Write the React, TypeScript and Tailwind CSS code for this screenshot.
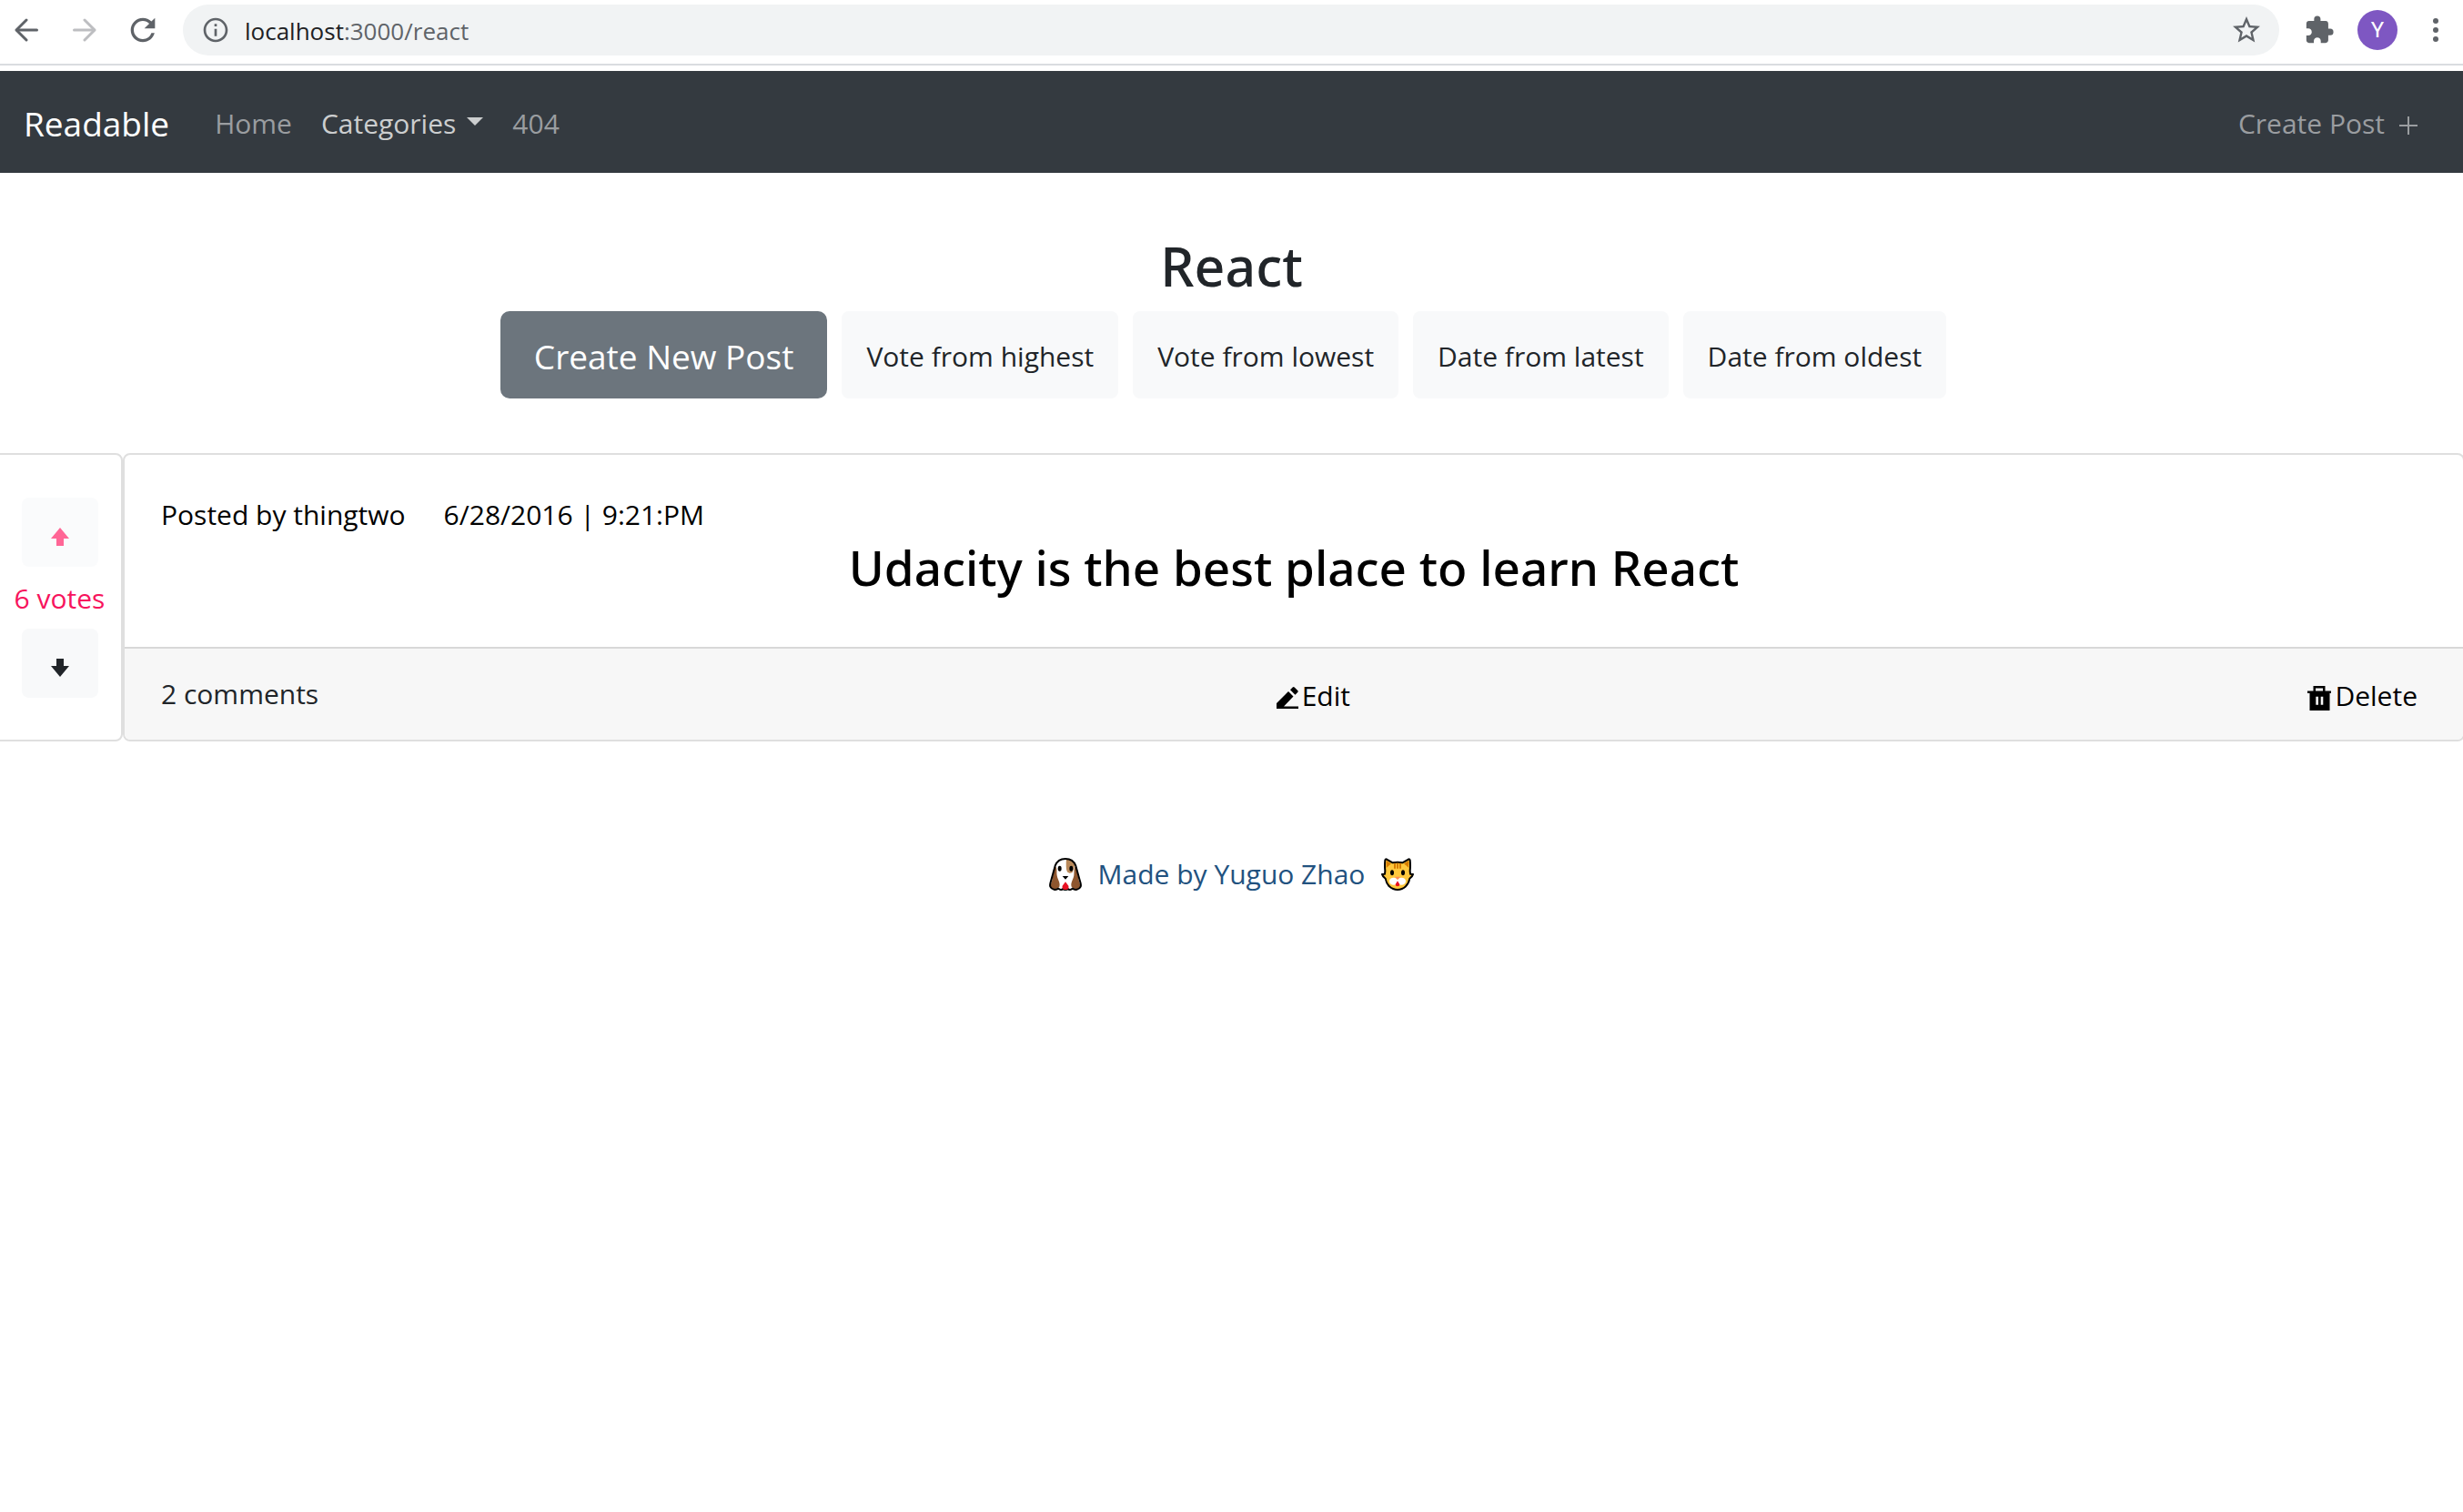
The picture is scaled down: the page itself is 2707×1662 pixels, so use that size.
import type { ReactNode } from "react";
import { MdExtension, MdInfoOutline, MdRefresh, MdStarBorder } from "react-icons/md";

function BackArrow({ className }: { className: string }) {
  return (
    <svg viewBox="0 0 26 26" className={className} fill="none" stroke="currentColor" strokeWidth="3" strokeLinecap="round">
      <path d="M24.5 13H2.5" />
      <path d="M13 2 2 13l11 11" strokeLinejoin="round" />
    </svg>
  );
}

function Kebab() {
  return (
    <svg viewBox="0 0 6 26" className="h-[26px] w-[6px]" fill="currentColor">
      <circle cx="3" cy="3" r="3" />
      <circle cx="3" cy="13" r="3" />
      <circle cx="3" cy="23" r="3" />
    </svg>
  );
}

function VoteArrow({ down = false }: { down?: boolean }) {
  return (
    <svg viewBox="0 0 20 20" className="size-5" fill="currentColor">
      <path d={down ? "M10 20 0 8h6V0h8v8h6z" : "M10 0l10 12h-6v8H6v-8H0z"} />
    </svg>
  );
}

function EditIcon() {
  return (
    <svg viewBox="0 0 24 24" className="mt-1 size-6" fill="currentColor">
      <path d="M0 24v-6L13 5l5.500 5.500L8 21.500h16V24z" />
      <path d="M15 3.300 17.700.600q1-1 2 0l3.500 3.500q1 1 0 2L20.500 8.800z" />
    </svg>
  );
}

function TrashIcon() {
  return (
    <svg viewBox="0 0 26 27" className="mt-1 h-[27px] w-[26px]" fill="currentColor" fillRule="evenodd">
      <path d="M6.500 0h13v5.500H26V8h-1.500v19h-22V8H0V5.500h6.500zM9 2.500v3h8v-3zM9.300 11.700v9H12v-9zM14.700 11.700v9h2.600v-9z" />
    </svg>
  );
}

function DogFace() {
  return (
    <svg viewBox="0 0 108 108" className="size-9" role="img" aria-label="Dog face">
      <path d="M20 26C26 10 38 3 54 3s28 7 34 23l12 44c3 12 7 18 4 25-5 11-19 12-27 6-5 5-11 5-15 1-4 4-12 4-16 0-4 4-10 4-15-1-8 6-22 5-27-6-3-7 1-13 4-25z" fill="#fff" />
      <path d="M57 4c14 0 24 8 28 20l-8 24c-6 4-13 3-17-2-5-7-4-32-3-42z" fill="#b98a5b" />
      <path d="M19 28c9 2 5 18 7 30 2 14 12 24 8 37-6 9-23 10-29 1-2-8 4-14 6-28z" fill="#8e562e" />
      <path d="M89 28c-9 2-5 18-7 30-2 14-12 24-8 37 6 9 23 10 29 1 2-8-4-14-6-28z" fill="#8e562e" />
      <path d="M20 26C26 10 38 3 54 3s28 7 34 23l12 44c3 12 7 18 4 25-5 11-19 12-27 6-5 5-11 5-15 1-4 4-12 4-16 0-4 4-10 4-15-1-8 6-22 5-27-6-3-7 1-13 4-25z" fill="none" stroke="#000" strokeWidth="6" strokeLinejoin="round" />
      <ellipse cx="35" cy="35" rx="6" ry="9" />
      <ellipse cx="73" cy="35" rx="6" ry="9" />
      <path d="M44 60h20L54 71z" />
      <path d="M54 79 64 92c2 9-3 13-10 13s-12-4-10-13z" fill="#e81123" />
    </svg>
  );
}

function CatFace() {
  return (
    <svg viewBox="0 0 108 108" className="size-9" role="img" aria-label="Cat face">
      <path d="M17 4 38 16q16-4 32 0L91 4q3 0 4 3 2 18 0 36l1 10 9 1q-1 6-11 14C90 90 75 105 54 105S18 90 14 68Q4 60 3 54l9-1 1-10q-2-18 0-36 1-3 4-3z" fill="#ffc83d" stroke="#000" strokeWidth="6" strokeLinejoin="round" />
      <path d="M17 9 33 19 17 33zM91 9 75 19 91 33z" fill="#d67d00" />
      <path d="M42 17h6v18h-6zM51 17h6v18h-6zM60 17h6v18h-6z" fill="#d67d00" />
      <ellipse cx="36" cy="49" rx="6" ry="9" />
      <ellipse cx="72" cy="49" rx="6" ry="9" />
      <ellipse cx="41" cy="77" rx="14" ry="12" fill="#fff" />
      <ellipse cx="67" cy="77" rx="14" ry="12" fill="#fff" />
      <path d="M45 62h18l-9 10z" fill="#ff8c5a" />
      <path d="M54 76l7 11q0 7-7 7t-7-7z" fill="#e81123" />
    </svg>
  );
}

function BrowserBar() {
  return (
    <div className="flex h-[72px] items-center border-b-2 border-[#dadce0] bg-white pb-1 pl-4 pr-[27px] text-[#5f6368]">
      <button aria-label="Back">
        <BackArrow className="size-[26px]" />
      </button>
      <button aria-label="Forward" className="ml-[38px] text-[#bdbec1]">
        <BackArrow className="size-[26px] rotate-180" />
      </button>
      <button aria-label="Reload" className="ml-[31px]">
        <MdRefresh className="size-10" />
      </button>
      <div className="ml-6 flex h-14 flex-1 items-center rounded-full bg-[#f1f3f4] pl-5 pr-[18px]">
        <MdInfoOutline className="size-8" />
        <a href="#" className="ml-4 flex-1 pt-[2px] text-[26px]">
          <span className="text-[#202124]">localhost</span>:3000/react
        </a>
        <button aria-label="Bookmark this page">
          <MdStarBorder className="size-9" />
        </button>
      </div>
      <button aria-label="Extensions" className="ml-[27px]">
        <MdExtension className="size-[34px]" />
      </button>
      <button
        aria-label="Profile"
        className="ml-[25px] size-11 rounded-full bg-[#7e57c2] font-['Roboto',sans-serif] text-2xl text-white"
      >
        Y
      </button>
      <button aria-label="Menu" className="ml-[39px]">
        <Kebab />
      </button>
    </div>
  );
}

function NavBar() {
  return (
    <nav className="mt-[6px] flex h-28 items-center bg-[#343a40] pt-[3px] pl-[26px] pr-[50px] text-[#9a9da0]">
      <a href="#" className="text-[37px] text-white">
        Readable
      </a>
      <a href="#" className="ml-[50px]">
        Home
      </a>
      <button className="ml-8 flex items-center gap-3 text-[#cccecf]">
        Categories
        <svg viewBox="0 0 18 9" className="-mt-1 h-[9px] w-[18px]" fill="currentColor">
          <path d="M0 0h18L9 9z" />
        </svg>
      </button>
      <a href="#" className="ml-8">
        404
      </a>
      <a href="#" className="ml-auto flex items-center gap-4">
        Create Post
        <svg viewBox="0 0 20 20" className="mt-1 size-5" stroke="currentColor" strokeWidth="2">
          <path d="M10 0v20M0 10h20" />
        </svg>
      </a>
    </nav>
  );
}

function SortButton({ children }: { children: ReactNode }) {
  return <button className="rounded-[8px] bg-[#f8f9fa] px-[27px] pt-1 text-[#212529]">{children}</button>;
}

function VotePanel() {
  return (
    <div className="-ml-2 flex w-[143px] flex-col items-center justify-center rounded-[8px] border-2 border-[#dfdfdf] pl-1">
      <button aria-label="Vote up" className="flex h-[76px] w-[84px] items-center justify-center rounded-[8px] bg-[#fafbfc] pt-[10px] text-[#ff6696]">
        <VoteArrow />
      </button>
      <p className="flex h-[68px] items-center pt-[3px] text-[#f7145d]">6 votes</p>
      <button aria-label="Vote down" className="flex h-[76px] w-[84px] items-center justify-center rounded-[8px] bg-[#f8f9fa] pt-[10px] text-[#212529]">
        <VoteArrow down />
      </button>
    </div>
  );
}

function PostCard() {
  return (
    <article className="-mr-[2px] flex-1 overflow-hidden rounded-[8px] border-2 border-[#dfdfdf]">
      <div className="h-[211px] px-10 pt-[42px] text-black">
        <p className="flex gap-[42px]">
          <span>Posted by thingtwo</span>
          <span>6/28/2016 | 9:21:PM</span>
        </p>
        <h2 className="text-center font-['Noto_Sans',sans-serif] text-[53px] leading-[68px] font-medium">
          Udacity is the best place to learn React
        </h2>
      </div>
      <div className="flex h-[102px] items-center justify-between border-t-2 border-[#d8d8d8] bg-[#f7f7f7] pl-10 pr-[50px]">
        <a href="#" className="text-[#212529]">
          2 comments
        </a>
        <button className="flex items-center gap-1 pt-1 text-black">
          <EditIcon />
          Edit
        </button>
        <button className="flex items-center gap-1 pt-1 text-black">
          <TrashIcon />
          Delete
        </button>
      </div>
    </article>
  );
}

export default function App() {
  return (
    <div className="min-h-screen overflow-x-hidden bg-white font-['Open_Sans','Noto_Sans',sans-serif] text-[30px] leading-[48px]">
      <BrowserBar />
      <NavBar />
      <main>
        <h1 className="pt-16 text-center font-['Noto_Sans',sans-serif] text-[59px] leading-[76px] font-medium text-[#212529]">
          React
        </h1>
        <div className="mt-3 flex h-24 justify-center gap-4 pr-[18px]">
          <button className="rounded-[10px] bg-[#6c757d] px-[37px] pt-1 text-[37px] text-white">Create New Post</button>
          <SortButton>Vote from highest</SortButton>
          <SortButton>Vote from lowest</SortButton>
          <SortButton>Date from latest</SortButton>
          <SortButton>Date from oldest</SortButton>
        </div>
        <section className="mt-[60px] flex">
          <VotePanel />
          <PostCard />
        </section>
      </main>
      <footer className="mt-[122px] flex items-center justify-center gap-[18px] text-[#22527f]">
        <DogFace />
        <a href="#">Made by Yuguo Zhao</a>
        <CatFace />
      </footer>
    </div>
  );
}
